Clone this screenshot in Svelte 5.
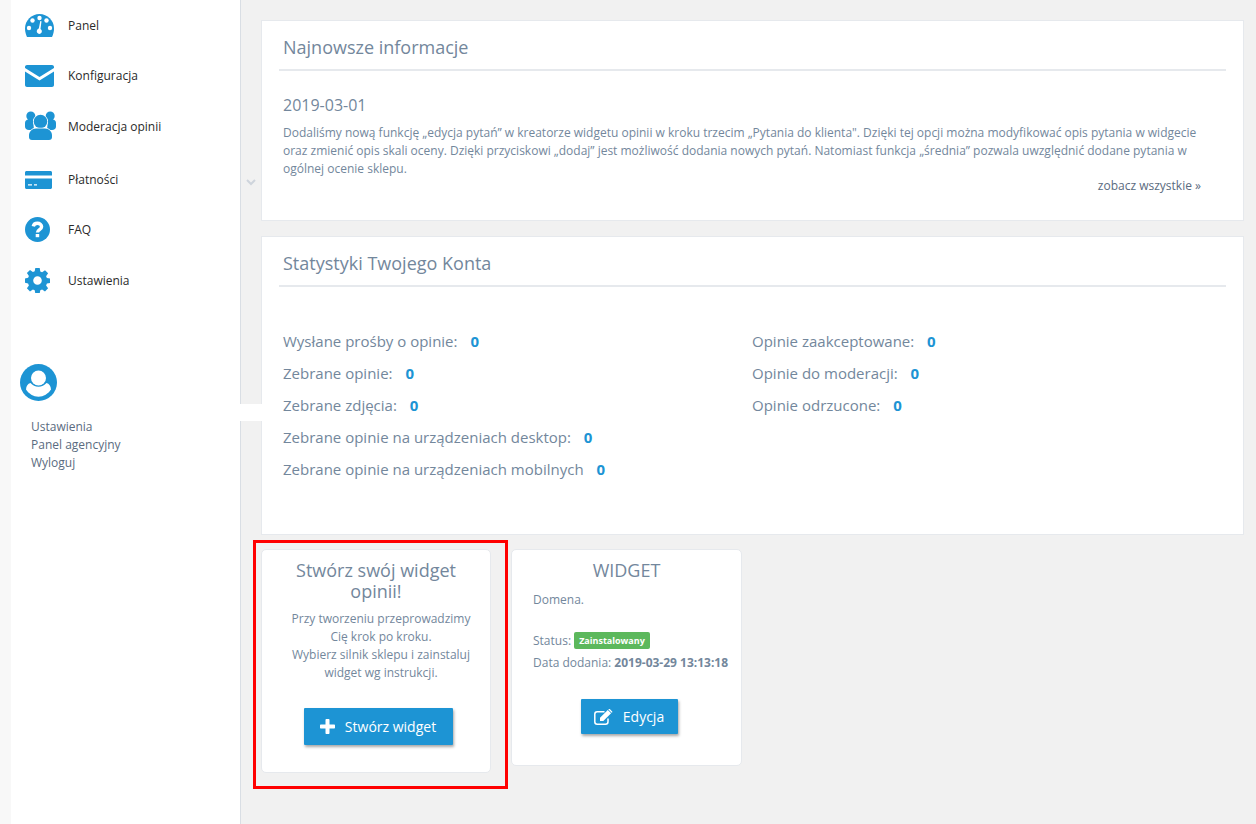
<script>
  const leftStats = [
    { label: "Wysłane prośby o opinie:", value: 0 },
    { label: "Zebrane opinie:", value: 0 },
    { label: "Zebrane zdjęcia:", value: 0 },
    { label: "Zebrane opinie na urządzeniach desktop:", value: 0 },
    { label: "Zebrane opinie na urządzeniach mobilnych", value: 0 }
  ]
  const rightStats = [
    { label: "Opinie zaakceptowane:", value: 0 },
    { label: "Opinie do moderacji:", value: 0 },
    { label: "Opinie odrzucone:", value: 0 }
  ]
</script>

<div class="layout">
  <aside class="sidebar">
    <nav class="menu">
      <a class="item" href="#panel">
        <svg width="29" height="23" viewBox="0 0 29 23">
          <path fill="#1d94d4" d="M14.5 0C6.5 0 0 6.5 0 14.5c0 3 .8 5.800 2 8.500h25c1.300-2.700 2-5.500 2-8.500C29 6.500 22.500 0 14.500 0z" />
          <g fill="#fff">
            <circle cx="14.500" cy="4" r="2.200" />
            <circle cx="7.500" cy="6.500" r="2.200" />
            <circle cx="21.500" cy="6.500" r="2.200" />
            <circle cx="4" cy="14" r="2.200" />
            <circle cx="25" cy="14" r="2.200" />
            <path d="M13.800 14.600l1.500-7.600 1.200.3-1 7.700c1.300.7 1.700 2.200 1.100 3.500-.7 1.300-2.300 1.800-3.500 1.100-1.300-.7-1.700-2.300-1-3.500.4-.8 1-1.300 1.700-1.500z" />
          </g>
        </svg>
        <span>Panel</span>
      </a>
      <a class="item" href="#konfiguracja">
        <svg width="29" height="22" viewBox="0 0 29 22">
          <path fill="#1d94d4" d="M2 0h25c1.100 0 2 .9 2 2v.9L14.500 12 0 2.900V2C0 .9.900 0 2 0zM0 6.400l14.500 9.100L29 6.400V20c0 1.100-.9 2-2 2H2c-1.100 0-2-.9-2-2z" />
        </svg>
        <span>Konfiguracja</span>
      </a>
      <a class="item raised" href="#moderacja">
        <svg width="31" height="29" viewBox="0 0 31 29">
          <g fill="#1d94d4">
            <circle cx="5.800" cy="5" r="4.500" />
            <circle cx="25.200" cy="5" r="4.500" />
            <path d="M0 12c0-2 1.500-3.500 3.500-3.500h4.500L9 19H4c-2.500 0-4-1.500-4-3.500zM31 12c0-2-1.500-3.500-3.500-3.500H23L22 19h5c2.500 0 4-1.500 4-3.500z" />
          </g>
          <g fill="#1d94d4" stroke="#fff" stroke-width="1.400" paint-order="stroke">
            <circle cx="15.500" cy="10.500" r="6.800" />
            <path d="M11 17.500h9c4 0 6.800 3 7 6.500v2c0 2-1 3-3 3H7c-2 0-3-1-3-3v-2c.2-3.500 3-6.500 7-6.500z" />
          </g>
        </svg>
        <span>Moderacja opinii</span>
      </a>
      <a class="item lowered" href="#platnosci">
        <svg width="27" height="18" viewBox="0 0 27 18">
          <path fill="#1d94d4" d="M1.500 0h24c.8 0 1.500.7 1.500 1.500V4.500H0V1.500C0 .7.700 0 1.500 0zM0 7.500h27v9c0 .8-.7 1.500-1.500 1.500h-24C.7 18 0 17.300 0 16.500zm3 5.700v1.300h4v-1.300zm6 0v1.300h3v-1.300z" fill-rule="evenodd" />
        </svg>
        <span>Płatności</span>
      </a>
      <a class="item" href="#faq">
        <svg width="25" height="25" viewBox="0 0 25 25">
          <circle cx="12.500" cy="12.500" r="12.500" fill="#1d94d4" />
          <path fill="none" stroke="#fff" stroke-width="3.400" d="M8.300 9.400c.4-2 2-3.100 4.100-3.100 2.400 0 4.200 1.400 4.200 3.400 0 3-4.100 2.900-4.100 5.900" />
          <rect x="10.700" y="17" width="3.500" height="3.200" fill="#fff" />
        </svg>
        <span>FAQ</span>
      </a>
      <a class="item" href="#ustawienia">
        <svg width="25" height="25" viewBox="0 0 25 25">
          <path fill="#1d94d4" fill-rule="evenodd" d="M10.300 0h4.400l.6 3.400 1.800.8 2.900-2 3.100 3.100-2 2.900.8 1.800 3.100.6v4.400l-3.100.6-.8 1.800 2 2.900-3.100 3.100-2.900-2-1.800.8-.6 3.300h-4.400l-.6-3.300-1.800-.8-2.900 2-3.100-3.100 2-2.900-.8-1.800L0 14.800v-4.400l3.100-.6.800-1.800-2-2.900 3.100-3.100 2.900 2 1.800-.8zM12.500 8.200a4.300 4.300 0 1 0 0 8.600 4.300 4.300 0 0 0 0-8.600z" />
        </svg>
        <span>Ustawienia</span>
      </a>
    </nav>

    <div class="account">
      <svg width="37" height="37" viewBox="0 0 37 37">
        <circle cx="18.500" cy="18.500" r="18.500" fill="#1d94d4" />
        <circle cx="18.500" cy="14" r="7.500" fill="#fff" />
        <path fill="#fff" d="M10.500 19c2 2.300 4.800 3.700 8 3.700s6-1.400 8-3.700c2.800.8 4.200 3 4.500 6.500-2.800 4.200-7.300 7.200-12.500 7.200S8.800 29.700 6 25.500c.3-3.500 1.700-5.700 4.500-6.500z" />
      </svg>
      <ul class="links">
        <li>Ustawienia</li>
        <li>Panel agencyjny</li>
        <li>Wyloguj</li>
      </ul>
    </div>
    <div class="notch"></div>
    <svg class="chevron" width="10" height="7" viewBox="0 0 10 7">
      <path fill="none" stroke="#ced4dc" stroke-width="2" d="M1 1l4 4 4-4" />
    </svg>
  </aside>

  <main class="content">
    <section class="card news">
      <h2>Najnowsze informacje</h2>
      <h4>2019-03-01</h4>
      <p>Dodaliśmy nową funkcję „edycja pytań” w kreatorze widgetu opinii w kroku trzecim „Pytania do klienta". Dzięki tej opcji można modyfikować opis pytania w widgecie oraz zmienić opis skali oceny. Dzięki przyciskowi „dodaj” jest możliwość dodania nowych pytań. Natomiast funkcja „średnia” pozwala uwzględnić dodane pytania w ogólnej ocenie sklepu.</p>
      <a class="more" href="#news">zobacz wszystkie »</a>
    </section>

    <section class="card stats">
      <h2>Statystyki Twojego Konta</h2>
      <div class="columns">
        <ul>
          {#each leftStats as s}
            <li>{s.label} <b>{s.value}</b></li>
          {/each}
        </ul>
        <ul>
          {#each rightStats as s}
            <li>{s.label} <b>{s.value}</b></li>
          {/each}
        </ul>
      </div>
    </section>

    <div class="widgets">
      <div class="highlight">
        <div class="widget create">
          <h3>Stwórz swój widget opinii!</h3>
          <p>Przy tworzeniu przeprowadzimy Cię krok po kroku.<br />Wybierz silnik sklepu i zainstaluj widget wg instrukcji.</p>
          <button class="btn big">
            <svg width="15" height="15" viewBox="0 0 15 15">
              <path fill="#fff" d="M5.500 1c0-.6.400-1 1-1h2c.6 0 1 .4 1 1v4.500H14c.6 0 1 .4 1 1v2c0 .6-.4 1-1 1H9.500V14c0 .6-.4 1-1 1h-2c-.6 0-1-.4-1-1V9.500H1c-.6 0-1-.4-1-1v-2c0-.6.400-1 1-1h4.500z" />
            </svg>
            Stwórz widget
          </button>
        </div>
      </div>

      <div class="widget installed">
        <h3>WIDGET</h3>
        <div class="meta">
          <div class="domain">Domena.</div>
          <div>Status: <span class="badge">Zainstalowany</span></div>
          <div class="added">Data dodania: <b>2019-03-29 13:13:18</b></div>
        </div>
        <button class="btn">
          <svg width="19" height="16" viewBox="0 0 19 16">
            <path fill="none" stroke="#fff" stroke-width="1.500" d="M14 9.500v3.200c0 1.300-1 2.500-2.500 2.500H3.200C1.800 15.200.8 14 .8 12.700V5.300c0-1.400 1-2.500 2.400-2.500h7.300" />
            <path fill="#fff" d="M6 8.800L13.800 1l3.300 3.300-7.800 7.800H6zM14.800 0c.3-.2.800-.2 1 0l2.400 2.400c.2.200.2.700 0 1l-.5.400-3.300-3.300z" />
          </svg>
          Edycja
        </button>
      </div>
    </div>
  </main>
</div>

<style>
  :global(body) {
    margin: 0;
    background: #f1f1f1;
  }

  .layout {
    display: flex;
    height: 824px;
    overflow: hidden;
    font-family: "Open Sans", sans-serif;
    font-size: 12px;
    color: #73879c;
    background: #f1f1f1;
  }

  a {
    color: inherit;
    text-decoration: none;
  }

  ul {
    list-style: none;
    margin: 0;
    padding: 0;
  }

  .sidebar {
    position: relative;
    flex: 0 0 229px;
    margin-left: 11px;
    background: #fff;
    box-shadow: -11px 0 0 #f8f8f8, 1px 0 0 #d9dee4;
  }

  .menu {
    display: grid;
    grid-template-rows: 50px 51px 53px 50px 51px 51px;
  }

  .item {
    display: grid;
    grid-template-columns: 43px 1fr;
    align-items: center;
    padding-left: 14px;
    color: #2a2a2a;
  }

  .raised svg {
    margin-bottom: 5px;
  }

  .raised span {
    padding-bottom: 2px;
  }

  .lowered svg {
    margin-top: 2px;
  }

  .account {
    margin-top: 58px;
    padding-left: 9px;
  }

  .account svg {
    display: block;
  }

  .links {
    margin: 17px 0 0 11px;
    line-height: 18px;
    color: #5a6b80;
  }

  .notch {
    position: absolute;
    left: 229px;
    top: 404px;
    width: 22px;
    height: 17px;
    background: #fff;
  }

  .chevron {
    position: absolute;
    left: 235px;
    top: 179px;
  }

  .content {
    flex: 1;
    min-width: 0;
    padding: 20px 12px 0 21px;
  }

  .card {
    box-sizing: border-box;
    background: #fff;
    border: 1px solid #e6e9ed;
    padding: 0 17px;
  }

  .card h2 {
    margin: 0;
    height: 48px;
    padding-left: 4px;
    border-bottom: 2px solid #e6e9ed;
    font-size: 18px;
    font-weight: 400;
    line-height: 52px;
  }

  .news {
    position: relative;
    height: 201px;
  }

  .news h4 {
    margin: 23px 0 0 4px;
    font-size: 16px;
    font-weight: 400;
    line-height: 22px;
  }

  .news p {
    margin: 8px 20px 0 4px;
    line-height: 18px;
  }

  .more {
    position: absolute;
    right: 42px;
    top: 156px;
    line-height: 18px;
    color: #5a6b80;
  }

  .stats {
    height: 299px;
    margin-top: 15px;
  }

  .columns {
    display: flex;
    padding: 38px 0 0 4px;
    font-size: 15px;
    line-height: 32px;
  }

  .columns ul {
    flex: 0 0 469px;
  }

  .columns b {
    margin-left: 9px;
    color: #1d94d4;
  }

  .widgets {
    display: flex;
    align-items: flex-start;
    margin: 5px 0 0 -8px;
  }

  .highlight {
    box-sizing: border-box;
    width: 255px;
    height: 249px;
    padding: 6px 5px;
    border: 3px solid #ff0000;
  }

  .widget {
    box-sizing: border-box;
    width: 230px;
    background: #fff;
    border: 1px solid #e6e9ed;
    border-radius: 5px;
    text-align: center;
  }

  .widget h3 {
    margin: 0;
    font-size: 18px;
    font-weight: 400;
    line-height: 21px;
  }

  .create {
    height: 224px;
    padding: 10px 24px 0;
  }

  .create p {
    margin: 8px -5px 0 5px;
    line-height: 18px;
  }

  .installed {
    width: 231px;
    height: 217px;
    margin: 9px 0 0 3px;
    padding-top: 10px;
  }

  .meta {
    margin-top: 10px;
    padding-left: 21px;
    text-align: left;
    line-height: 18px;
  }

  .domain {
    margin-bottom: 23px;
  }

  .added {
    margin-top: 4px;
  }

  .badge {
    display: inline-block;
    padding: 0 5px;
    border-radius: 2px;
    background: #5cb85c;
    color: #fff;
    font-size: 9px;
    font-weight: 700;
    line-height: 17px;
    vertical-align: 1px;
  }

  .btn {
    display: inline-flex;
    align-items: center;
    justify-content: center;
    gap: 10px;
    width: 97px;
    height: 35px;
    margin: 27px 0 0 5px;
    border: 0;
    border-radius: 1px;
    background: #1d94d4;
    color: #fff;
    font: 14px "Open Sans", sans-serif;
    box-shadow: 1px 2px 3px rgba(0, 0, 0, 0.35);
  }

  .btn.big {
    width: 149px;
    height: 37px;
    margin: 26px 0 0 4px;
  }
</style>
